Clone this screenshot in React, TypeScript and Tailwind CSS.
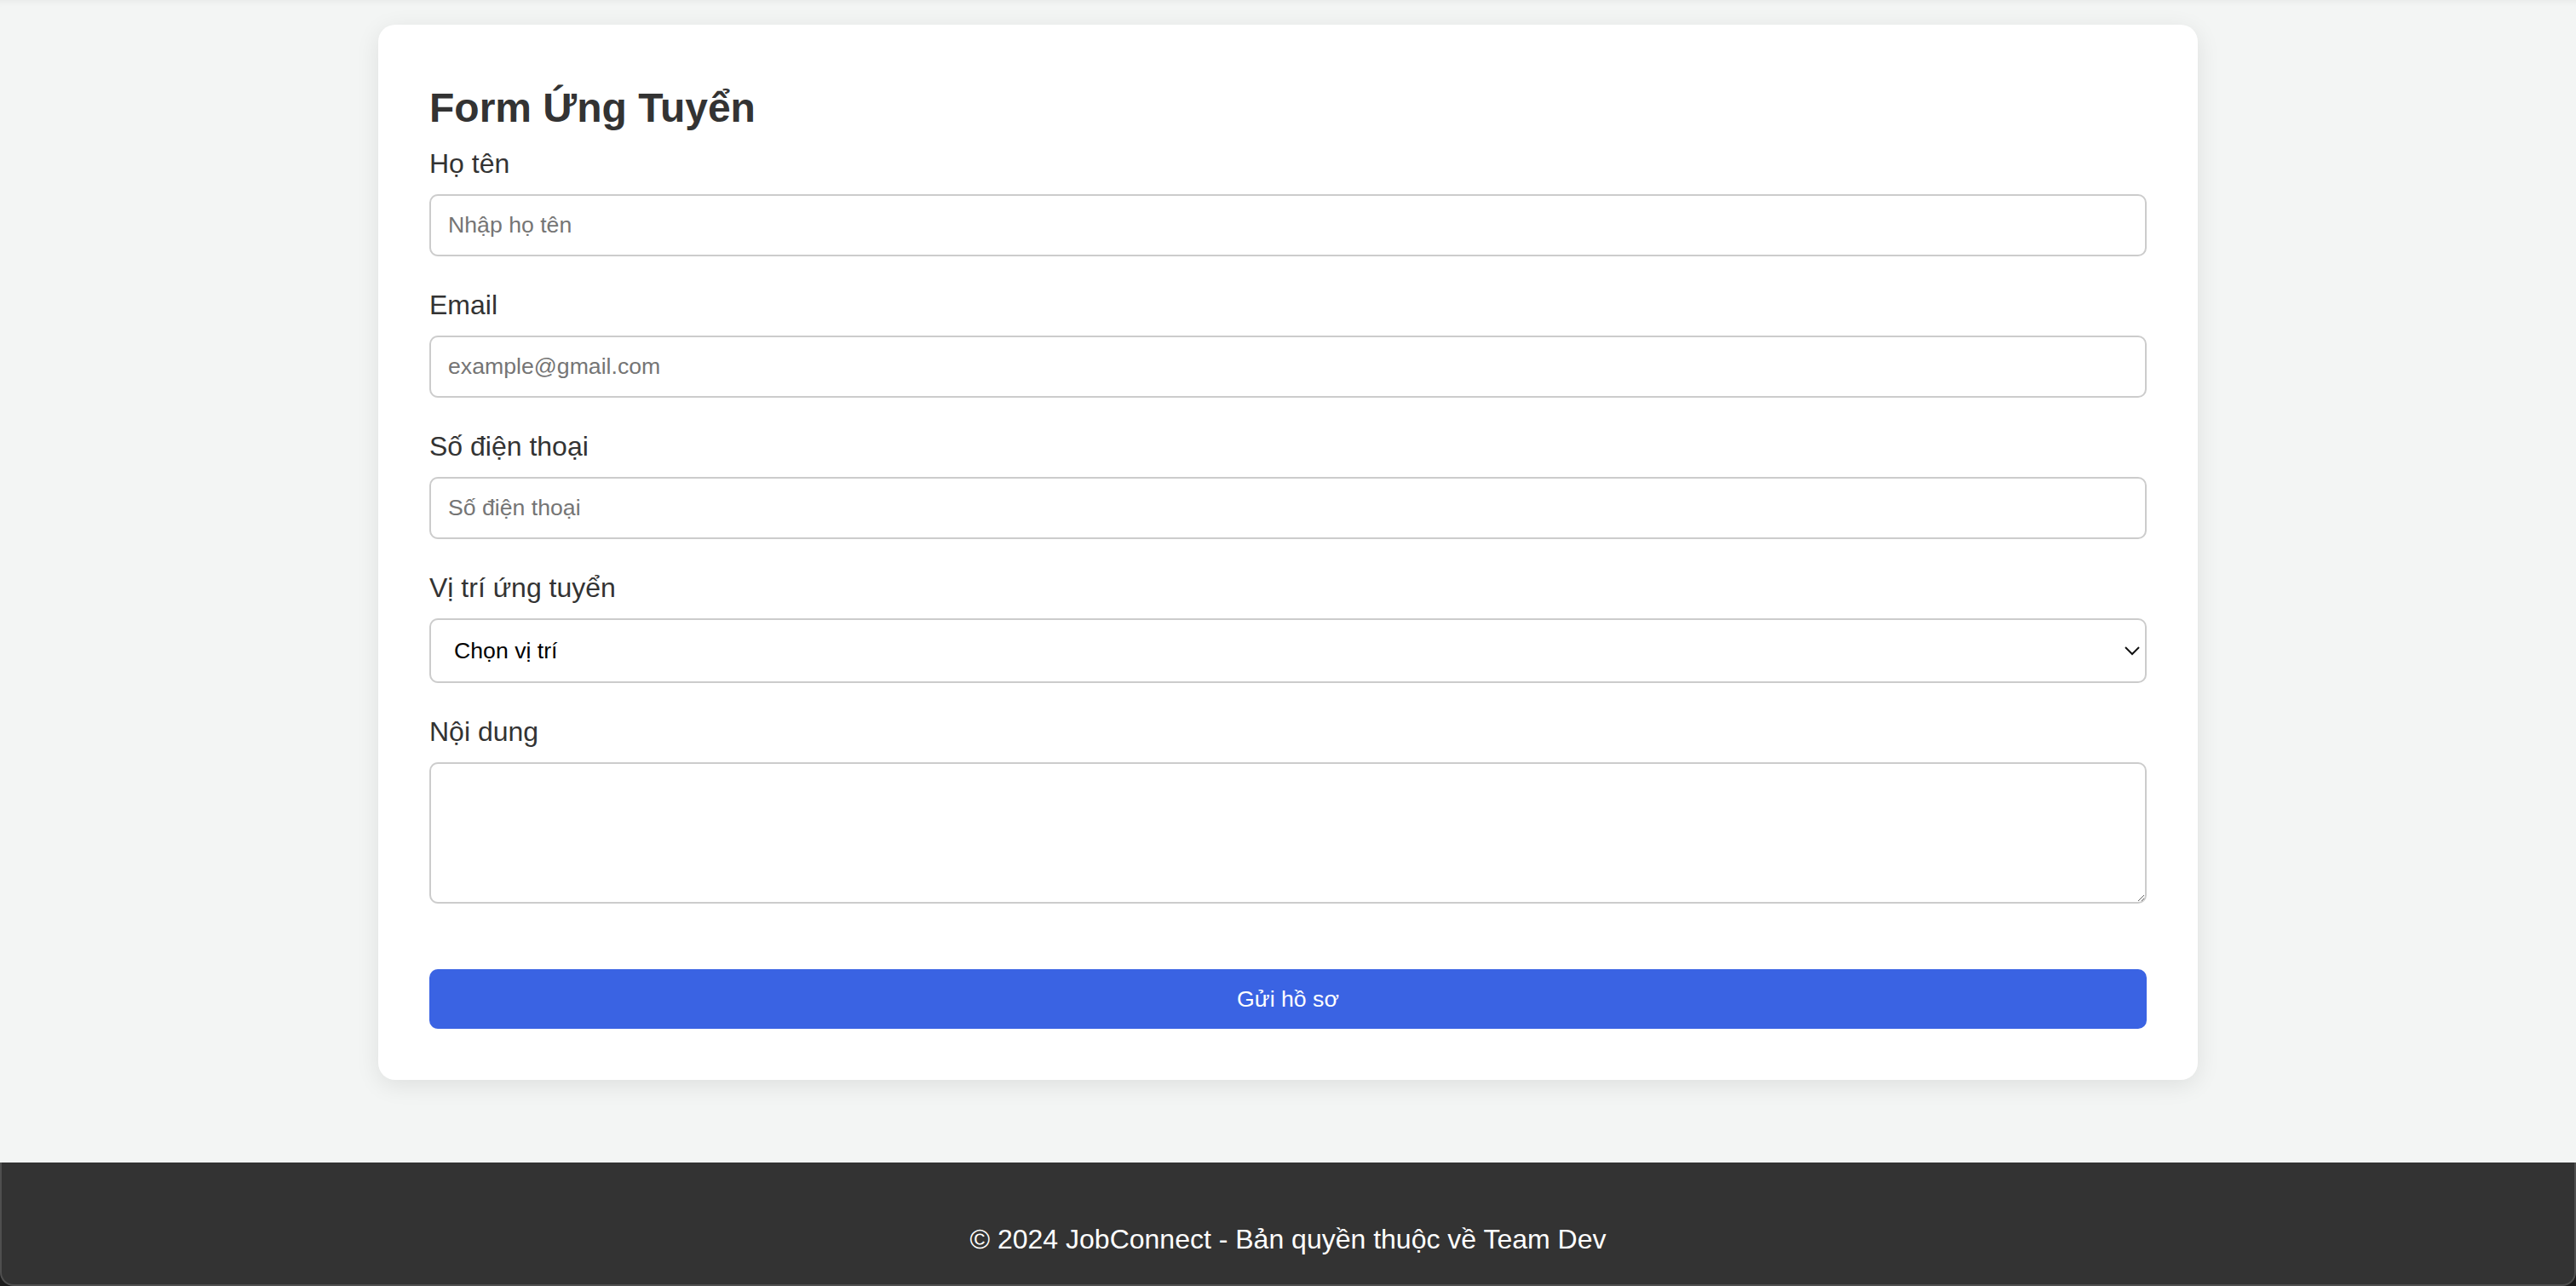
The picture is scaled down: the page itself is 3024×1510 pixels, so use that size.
const fields = [
  { label: 'Họ tên', type: 'text', placeholder: 'Nhập họ tên' },
  { label: 'Email', type: 'email', placeholder: 'example@gmail.com' },
  { label: 'Số điện thoại', type: 'tel', placeholder: 'Số điện thoại' },
];

const inputCls =
  "block w-full h-[73px] rounded-[10px] border-2 border-[#cccccc] bg-white px-[20px] text-[26.67px] text-black outline-none placeholder:text-[#757575] font-['Liberation_Sans',Arial,sans-serif]";

export default function App() {
  return (
    <div className="min-h-[1510px] flex flex-col bg-[#f3f5f4] shadow-[inset_0_9px_8px_-8px_rgba(0,0,0,0.06)] font-['Liberation_Sans',Arial,sans-serif] text-[#333333]">
      <main className="flex-1 pt-[29px] pb-[97px]">
        <div className="mx-auto w-[2136px] rounded-[20px] bg-white px-[60px] pt-[60px] pb-[60px] shadow-[0_6px_28px_rgba(0,0,0,0.09)]">
          <h2 className="mt-[10px] mb-[20px] text-[48px] leading-[55px] font-bold text-[#333333]">
            Form Ứng Tuyển
          </h2>

          <form className="flex flex-col gap-[39px]" onSubmit={(e) => e.preventDefault()}>
            {fields.map((f) => (
              <div key={f.label}>
                <label className="block mb-[17px] text-[32px] leading-[37px] text-[#333333]">{f.label}</label>
                <input type={f.type} placeholder={f.placeholder} className={inputCls} />
              </div>
            ))}

            {/* vị trí */}
            <div>
              <label className="block mb-[17px] text-[32px] leading-[37px] text-[#333333]">Vị trí ứng tuyển</label>
              <div className="relative">
                <select
                  defaultValue=""
                  className="block w-full h-[76px] appearance-none rounded-[10px] border-2 border-[#cccccc] bg-white pl-[27px] pr-[40px] text-[26.67px] text-black outline-none"
                >
                  <option value="">Chọn vị trí</option>
                  <option>Frontend Developer</option>
                  <option>Backend Developer</option>
                  <option>UI/UX Designer</option>
                </select>
                <svg
                  className="pointer-events-none absolute right-[8px] top-[33px] h-[11px] w-[18px]"
                  viewBox="0 0 18 11"
                  fill="none"
                  stroke="#111"
                  strokeWidth="2"
                >
                  <path d="M1 1l8 8 8-8" />
                </svg>
              </div>
            </div>

            <div>
              <label className="block mb-[17px] text-[32px] leading-[37px] text-[#333333]">Nội dung</label>
              <textarea className="block w-full h-[166px] rounded-[10px] border-2 border-[#cccccc] bg-white px-[20px] py-[20px] text-[26.67px] outline-none" />
            </div>

            <button
              type="submit"
              className="mt-[38px] h-[70px] w-full rounded-[10px] bg-[#3a63e3] text-[26.67px] text-white"
            >
              Gửi hồ sơ
            </button>
          </form>
        </div>
      </main>

      <div className="bg-[#1c1c1c]">
        <footer className="rounded-b-[16px] border-x-2 border-b-2 border-[#4f4f4f] bg-[#333333] pt-[72px] pb-[34px] text-center">
          <p className="text-[32px] leading-[37px] text-white">© 2024 JobConnect - Bản quyền thuộc về Team Dev</p>
        </footer>
      </div>
    </div>
  );
}
